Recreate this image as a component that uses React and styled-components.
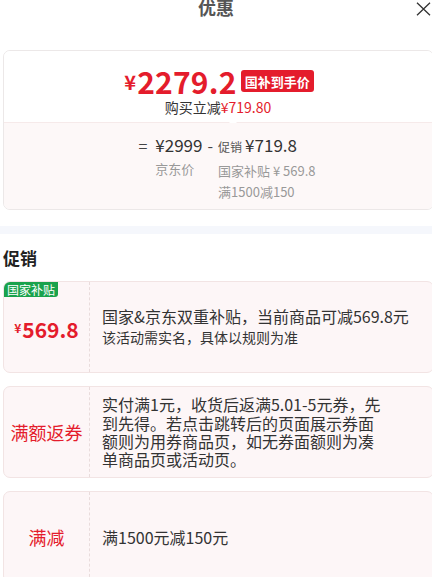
import React from "react";
import styled, { createGlobalStyle } from "styled-components";

const GlobalStyle = createGlobalStyle`
  html, body {
    margin: 0;
    padding: 0;
    background: #fff;
    overflow: hidden;
  }
  body {
    font-family: "Noto Sans CJK SC", "Noto Sans", sans-serif;
    color: #333;
  }
`;

const RED = "#e41c2c";

const Page = styled.div`
  width: 432px;
  display: flex;
  flex-direction: column;

  & > * {
    flex-shrink: 0;
  }
`;

const Header = styled.div`
  display: grid;
  grid-template-columns: 1fr auto 1fr;
  align-items: center;
  height: 18px;
  margin-top: -2px;
`;

const Title = styled.div`
  grid-column: 2;
  font-size: 18px;
  line-height: 18px;
  font-weight: 700;
  color: #555;
`;

const Close = styled.div`
  justify-self: end;
  display: flex;
  margin-right: 1px;
  margin-top: 4px;
`;

const PriceCard = styled.div`
  margin: 34px 0 0 3px;
  width: 429px;
  border: 1px solid #ece8e8;
  border-radius: 7px;
  overflow: hidden;
`;

const PriceTop = styled.div`
  height: 71px;
  padding-top: 13px;
  box-sizing: border-box;
  display: flex;
  flex-direction: column;
  align-items: center;
  background: #fff;
`;

const PriceRow = styled.div`
  display: flex;
  align-items: center;
  height: 34px;
  margin-left: 1px;
`;

const Yen = styled.span`
  font-size: ${({ size }) => size || 20}px;
  font-weight: 600;
  color: ${RED};
  margin-right: 1px;
`;

const BigPrice = styled.span`
  font-size: 30px;
  font-weight: 600;
  color: ${RED};
  letter-spacing: 0.2px;
`;

const Badge = styled.span`
  margin-left: 4px;
  height: 22px;
  padding: 0 4px;
  display: flex;
  align-items: center;
  background: ${RED};
  color: #fff;
  font-size: 13px;
  font-weight: 700;
  border-radius: 3px;
`;

const SubLine = styled.div`
  font-size: 14px;
  line-height: 18px;
  color: #333;
  margin-left: -1px;
`;

const RedText = styled.span`
  color: ${RED};
`;

const PriceBottom = styled.div`
  position: relative;
  height: 87px;
  box-sizing: border-box;
  padding: 10px 0 0 17px;
  background: #fdf8f8;
  border-top: 1px solid #f6eaea;
  display: flex;
  justify-content: center;
  gap: 5px;

  &::before {
    content: "";
    position: absolute;
    top: -4px;
    left: 225px;
    border-left: 4px solid transparent;
    border-right: 4px solid transparent;
    border-bottom: 4px solid #fff;
  }
`;

const Op = styled.div`
  font-size: 16px;
  line-height: 24px;
  color: #444;
  margin-right: ${({ wide }) => (wide ? 3 : 0)}px;
`;

const Col = styled.div`
  display: flex;
  flex-direction: column;
`;

const Amount = styled.div`
  font-size: 17px;
  line-height: 24px;
  color: #333;
  display: flex;
  align-items: baseline;
  gap: 3px;
`;

const Small = styled.span`
  font-size: 12px;
  color: #555;
`;

const Label = styled.div`
  font-size: 13px;
  line-height: 21px;
  color: #999;
  margin-top: ${({ first }) => (first ? 1 : 0)}px;
`;

const Band = styled.div`
  margin-top: 16px;
  height: 8px;
  background: #f5f7fc;
`;

const SectionTitle = styled.div`
  margin: 12px 0 0 3px;
  font-size: 17px;
  line-height: 24px;
  font-weight: 700;
  color: #222;
`;

const List = styled.div`
  margin: 11px 0 0 3px;
  display: flex;
  flex-direction: column;
  gap: 13px;
`;

const Coupon = styled.div`
  position: relative;
  width: 429px;
  min-height: 90px;
  display: flex;
  border: 1px solid #f2e4e4;
  border-radius: 7px;
  background: #fdf6f7;
  overflow: hidden;
`;

const Tag = styled.div`
  position: absolute;
  top: 0;
  left: 0;
  height: 15px;
  padding: 0 3px;
  background: #1aa24c;
  color: #fff;
  font-size: 12px;
  line-height: 15px;
  border-bottom-right-radius: 3px;
`;

const Left = styled.div`
  width: 85px;
  flex-shrink: 0;
  display: flex;
  align-items: center;
  justify-content: center;
  border-right: 1px dashed #e9dcdc;
  color: ${RED};
  font-size: 18px;
`;

const CouponValue = styled.span`
  font-size: 21px;
  font-weight: 600;
  color: ${RED};
  margin-top: 3px;
`;

const Right = styled.div`
  flex: 1;
  padding: 8px 0 8px 12px;
  display: flex;
  flex-direction: column;
  justify-content: center;
`;

const Desc = styled.div`
  font-size: 16px;
  line-height: ${({ tight }) => (tight ? 18.3 : 21)}px;
  color: #333;
  max-width: ${({ narrow }) => (narrow ? "284px" : "none")};
`;

const Note = styled.div`
  font-size: 14px;
  line-height: 21px;
  color: #333;
`;

const CloseIcon = () => (
  <svg width="15" height="14" viewBox="0 0 15 14">
    <path d="M1 0.8 L14 13.2 M14 0.8 L1 13.2" stroke="#333" strokeWidth="1.3" fill="none" />
  </svg>
);

export default function App() {
  return (
    <Page>
      <GlobalStyle />
      <Header>
        <Title>优惠</Title>
        <Close>
          <CloseIcon />
        </Close>
      </Header>

      <PriceCard>
        <PriceTop>
          <PriceRow>
            <Yen>¥</Yen>
            <BigPrice>2279.2</BigPrice>
            <Badge>国补到手价</Badge>
          </PriceRow>
          <SubLine>
            购买立减<RedText>¥719.80</RedText>
          </SubLine>
        </PriceTop>
        <PriceBottom>
          <Op wide>=</Op>
          <Col>
            <Amount>¥2999</Amount>
            <Label first>京东价</Label>
          </Col>
          <Op>-</Op>
          <Col>
            <Amount>
              <Small>促销</Small>¥719.8
            </Amount>
            <Label first>国家补贴 ¥ 569.8</Label>
            <Label>满1500减150</Label>
          </Col>
        </PriceBottom>
      </PriceCard>

      <Band />
      <SectionTitle>促销</SectionTitle>

      <List>
        <Coupon>
          <Tag>国家补贴</Tag>
          <Left>
            <Yen size={12}>¥</Yen>
            <CouponValue>569.8</CouponValue>
          </Left>
          <Right>
            <Desc>国家&amp;京东双重补贴，当前商品可减569.8元</Desc>
            <Note>该活动需实名，具体以规则为准</Note>
          </Right>
        </Coupon>
        <Coupon>
          <Left>满额返券</Left>
          <Right>
            <Desc tight narrow>
              实付满1元，收货后返满5.01-5元券，先到先得。若点击跳转后的页面展示券面额则为用券商品页，如无券面额则为凑单商品页或活动页。
            </Desc>
          </Right>
        </Coupon>
        <Coupon>
          <Left>满减</Left>
          <Right>
            <Desc>满1500元减150元</Desc>
          </Right>
        </Coupon>
      </List>
    </Page>
  );
}
